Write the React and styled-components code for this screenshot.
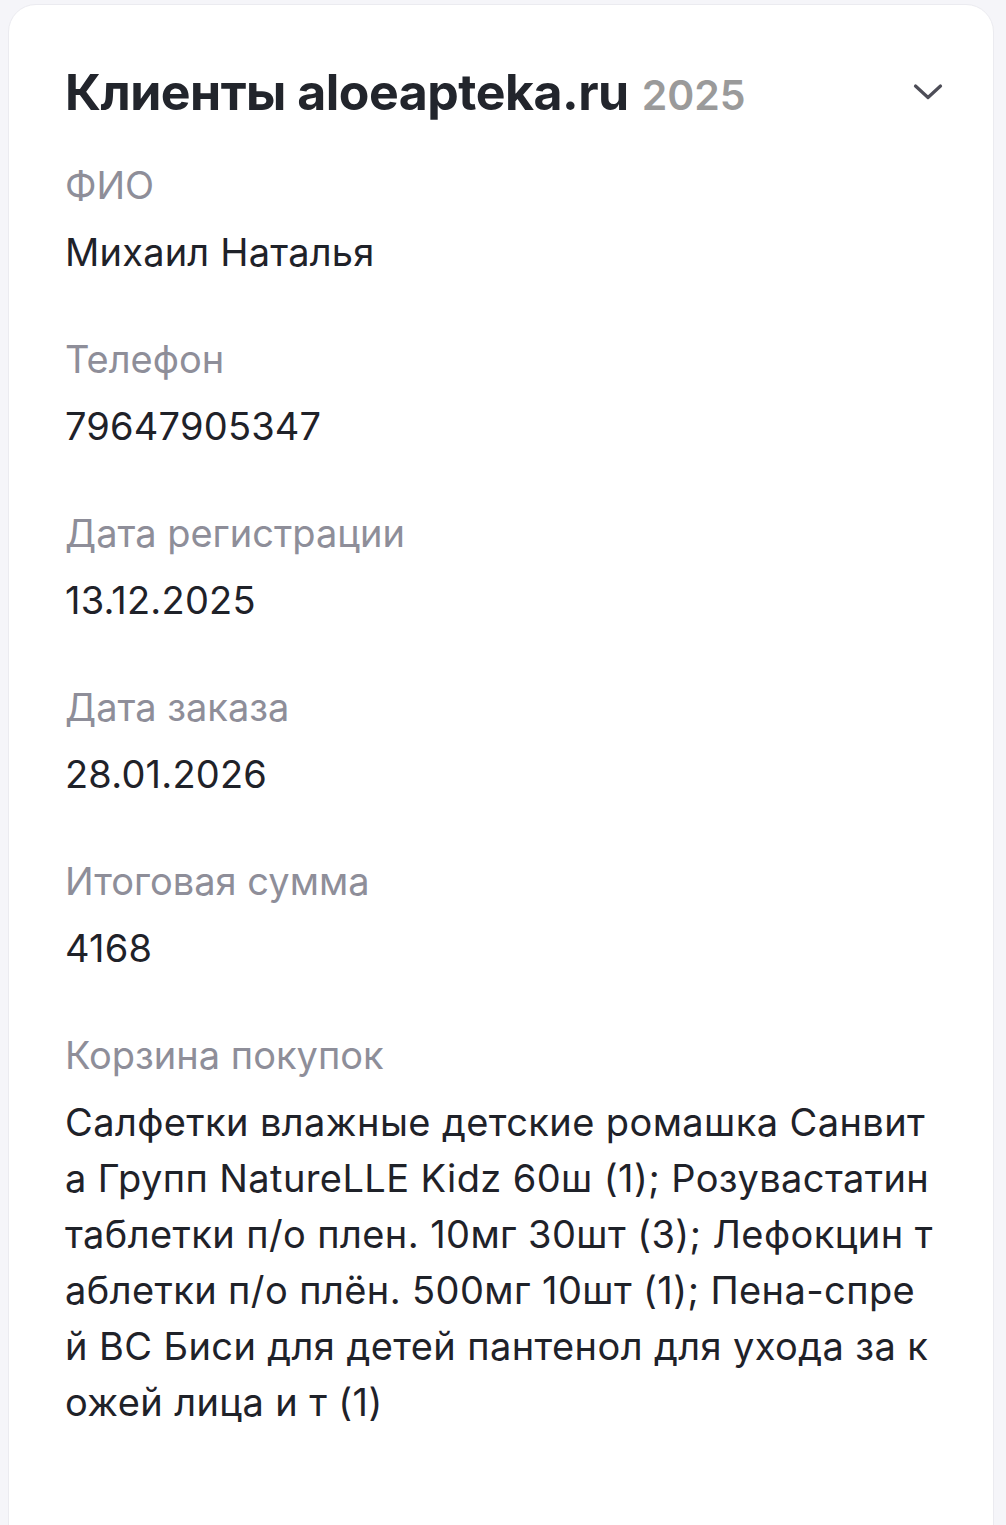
import React from 'react'
import styled, { createGlobalStyle } from 'styled-components'

const GlobalStyle = createGlobalStyle`
    body {
        margin: 0;
        background: #f5f5f9;
        font-family: Inter, "Noto Sans", sans-serif;
    }
`;

const Card = styled.div`
    box-sizing: border-box;
    margin: 4px 12px 0 8px;
    min-height: 1519px;
    background: #fff;
    border: 1px solid #ebebf0;
    border-radius: 28px;
    padding: 59px 50px 90px 56px;
`;

const Header = styled.div`
    display: flex;
    align-items: center;
    justify-content: space-between;
    height: 56px;
    margin-bottom: 37px;
`;

const Title = styled.h1`
    margin: 0;
    font-size: 50px;
    font-weight: 700;
    letter-spacing: -0.5px;
    color: #22252c;
    white-space: nowrap;
`;

const Year = styled.span`
    font-size: 41px;
    font-weight: 600;
    letter-spacing: 0;
    color: #9a9a9a;
    margin-left: 13px;
`;

const Toggle = styled.button`
    border: 0;
    background: none;
    padding: 0;
    display: flex;
    color: #4d4d57;
`;

const Field = styled.div`
    display: flex;
    flex-direction: column;
    gap: 11px;
    margin-bottom: 51px;
`;

const Label = styled.div`
    font-size: 38px;
    line-height: 56px;
    color: #8e8e99;
`;

const Value = styled.div`
    font-size: 38px;
    line-height: 56px;
    letter-spacing: ${p => (p.$wrap ? '0.4px' : '0.2px')};
    color: #1f2229;
    white-space: ${p => (p.$wrap ? 'pre-line' : 'normal')};
    word-break: break-all;
`;

const basket = [
    'Салфетки влажные детские ромашка Санвит',
    'а Групп NatureLLE Kidz 60ш (1); Розувастатин',
    'таблетки п/о плен. 10мг 30шт (3); Лефокцин т',
    'аблетки п/о плён. 500мг 10шт (1); Пена-спре',
    'й ВС Биси для детей пантенол для ухода за к',
    'ожей лица и т (1)',
].join('\n');

const fields = [
    ['ФИО', 'Михаил Наталья'],
    ['Телефон', '79647905347'],
    ['Дата регистрации', '13.12.2025'],
    ['Дата заказа', '28.01.2026'],
    ['Итоговая сумма', '4168'],
    ['Корзина покупок', basket, true],
];

function Chevron() {
    return (
        <svg width="30" height="18" viewBox="0 0 30 18" fill="none" stroke="currentColor" strokeWidth="3.2" strokeLinecap="round" strokeLinejoin="round">
            <path d="M2.5 3L15 14.5 27.5 3" />
        </svg>
    )
}

export default function App() {
    return (
        <>
            <GlobalStyle />
            <Card>
                <Header>
                    <Title>Клиенты aloeapteka.ru<Year>2025</Year></Title>
                    <Toggle><Chevron /></Toggle>
                </Header>
                {fields.map(([label, value, wrap]) => (
                    <Field key={label}>
                        <Label>{label}</Label>
                        <Value $wrap={wrap}>{value}</Value>
                    </Field>
                ))}
            </Card>
        </>
    )
}
